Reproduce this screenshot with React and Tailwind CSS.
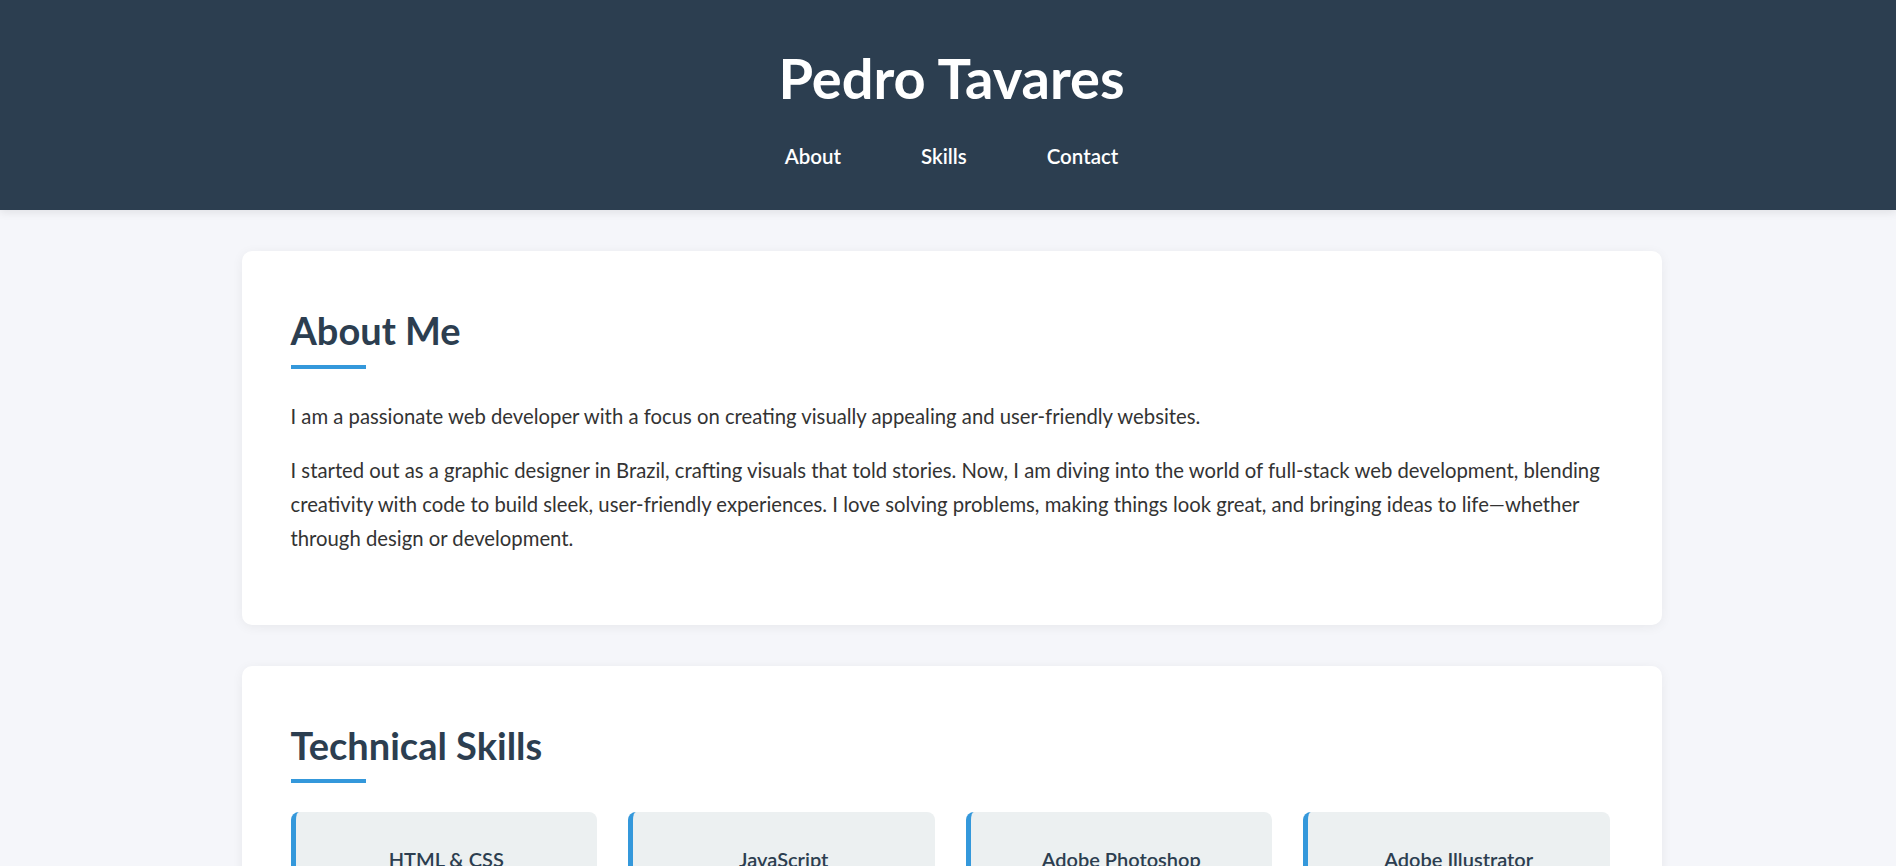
const skills = ['HTML & CSS', 'JavaScript', 'Adobe Photoshop', 'Adobe Illustrator'];

function Section({ title, children }) {
  return (
    <section className="w-[1420px] mx-auto bg-white rounded-[10px] shadow-[0_2px_12px_rgba(0,0,0,0.06)] pl-[49px] pr-[52px] pt-[57px] pb-[70px] mb-[41px]">
      <h2 className="text-[38px] leading-[1.2] font-bold text-[#2c3e50]">{title}</h2>
      <div className="mt-[11px] h-1 w-[75px] bg-[#3498db]" />
      {children}
    </section>
  );
}

export default function App() {
  return (
    <div className="min-h-screen bg-[#f5f6fa] text-[#333] font-['Lato','Noto_Sans',sans-serif] pl-[7px]">
      <header className="-ml-[7px] pl-[7px] bg-[#2c3e50] text-white text-center h-[210px] pt-[44px] shadow-[0_3px_8px_rgba(0,0,0,0.08)]">
        <h1 className="text-[56px] leading-[1.2] font-bold">Pedro Tavares</h1>
        <nav className="mt-[30px] flex justify-center gap-[80px] text-[20.5px] font-semibold">
          <a href="#about">About</a>
          <a href="#skills">Skills</a>
          <a href="#contact">Contact</a>
        </nav>
      </header>

      <main className="pt-[41px]">
        <Section title="About Me">
          <p className="mt-[30px] text-[20.3px] leading-[34px]">
            I am a passionate web developer with a focus on creating visually appealing and user-friendly websites.
          </p>
          <p className="mt-[20px] text-[20.3px] leading-[34px]">
            I started out as a graphic designer in Brazil, crafting visuals that told stories. Now, I am diving into the world of full-stack web development, blending creativity with code to build sleek, user-friendly experiences. I love solving problems, making things look great, and bringing ideas to life—whether through design or development.
          </p>
        </Section>

        <Section title="Technical Skills">
          <div className="mt-[29px] grid grid-cols-4 gap-[31px]">
            {skills.map((s) => (
              <div key={s} className="bg-[#ecf0f1] border-l-[5px] border-[#3498db] rounded-lg px-6 pt-[32px] pb-[32px] text-center text-[20px] font-semibold text-[#2c3e50]">
                {s}
              </div>
            ))}
          </div>
        </Section>
      </main>
    </div>
  );
}
